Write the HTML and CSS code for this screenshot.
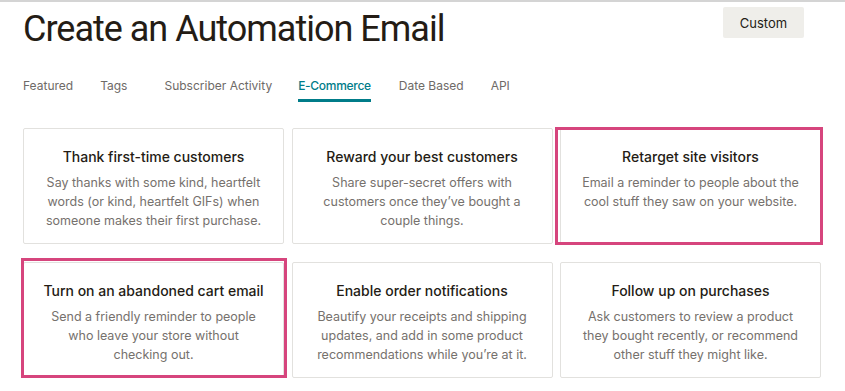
FILE: index.html
```html
<!DOCTYPE html>
<html>
<head>
<meta charset="utf-8">
<link rel="stylesheet" href="styles.css">
</head>
<body>
<div class="page">
  <header class="head">
    <h1 class="title">Create an Automation Email</h1>
    <button class="custom">Custom</button>
  </header>
  <nav class="tabs">
    <span class="tab t1">Featured</span>
    <span class="tab t2">Tags</span>
    <span class="tab t3">Subscriber Activity</span>
    <span class="tab t4 active">E-Commerce</span>
    <span class="tab t5">Date Based</span>
    <span class="tab t6">API</span>
  </nav>
  <div class="grid">
    <div class="card">
      <h2>Thank first-time customers</h2>
      <p>Say thanks with some kind, heartfelt words (or kind, heartfelt GIFs) when someone makes their first purchase.</p>
    </div>
    <div class="card">
      <h2>Reward your best customers</h2>
      <p>Share super-secret offers with customers once they’ve bought a couple things.</p>
    </div>
    <div class="card mark mark-a">
      <h2>Retarget site visitors</h2>
      <p>Email a reminder to people about the cool stuff they saw on your website.</p>
    </div>
    <div class="card mark mark-b">
      <h2>Turn on an abandoned cart email</h2>
      <p>Send a friendly reminder to people who leave your store without checking out.</p>
    </div>
    <div class="card">
      <h2>Enable order notifications</h2>
      <p>Beautify your receipts and shipping updates, and add in some product recommendations while you’re at it.</p>
    </div>
    <div class="card">
      <h2>Follow up on purchases</h2>
      <p>Ask customers to review a product they bought recently, or recommend other stuff they might like.</p>
    </div>
  </div>
</div>
</body>
</html>
```
FILE: styles.css
```css
html, body {
  margin: 0;
  padding: 0;
  background: #fff;
}
body {
  font-family: Inter, "Liberation Sans", sans-serif;
  color: #241c15;
  border-top: 2px solid #d4d4d4;
  width: 845px;
  height: 389px;
  overflow: hidden;
}
.page {
  padding: 0 24px 0 23px;
}
.head {
  display: flex;
  justify-content: space-between;
  align-items: flex-start;
  height: 72px;
}
.title {
  margin: 0;
  padding-top: 5px;
  font-family: Roboto, Inter, sans-serif;
  font-size: 36px;
  line-height: 44px;
  font-weight: 400;
  letter-spacing: -1px;
  color: #241c15;
}
.custom {
  margin-top: 5px;
  margin-right: 17px;
  width: 81px;
  height: 31px;
  border: 0;
  border-radius: 2px;
  background: #efeeea;
  color: #241c15;
  font-family: inherit;
  font-size: 13px;
  padding: 0;
}
.tabs {
  display: flex;
  height: 28px;
  margin-bottom: 26px;
  font-size: 12px;
  color: #6e6a67;
}
.tab {
  line-height: 24px;
  height: 28px;
  box-sizing: border-box;
}
.t1 { margin-right: 27px; }
.t2 { margin-right: 37px; }
.t3 { margin-right: 26px; }
.t4 { margin-right: 28px; }
.t5 { margin-right: 27px; }
.tab.active {
  color: #007c89;
  font-weight: 500;
  letter-spacing: -0.3px;
  border-bottom: 3px solid #007c89;
}
.grid {
  display: grid;
  grid-template-columns: repeat(3, 261px);
  grid-auto-rows: 116px;
  column-gap: 7.5px;
  row-gap: 18px;
}
.card {
  position: relative;
  border: 1px solid #e2e1de;
  border-radius: 2px;
  text-align: center;
  padding: 18px 6px 0;
  box-sizing: border-box;
}
.card h2 {
  margin: 0;
  font-size: 14px;
  line-height: 20px;
  font-weight: 500;
  color: #241c15;
}
.card p {
  margin: 6px 15px 0;
  font-size: 12.5px;
  line-height: 19px;
  color: #76716d;
}
.mark::after {
  content: "";
  position: absolute;
  border: 3px solid #d6457d;
  pointer-events: none;
}
.mark-a::after {
  left: -6px;
  top: -2px;
  right: -3px;
  bottom: -2px;
}
.mark-b::after {
  left: -3px;
  top: -5px;
  right: -4px;
  bottom: -1px;
}
```
